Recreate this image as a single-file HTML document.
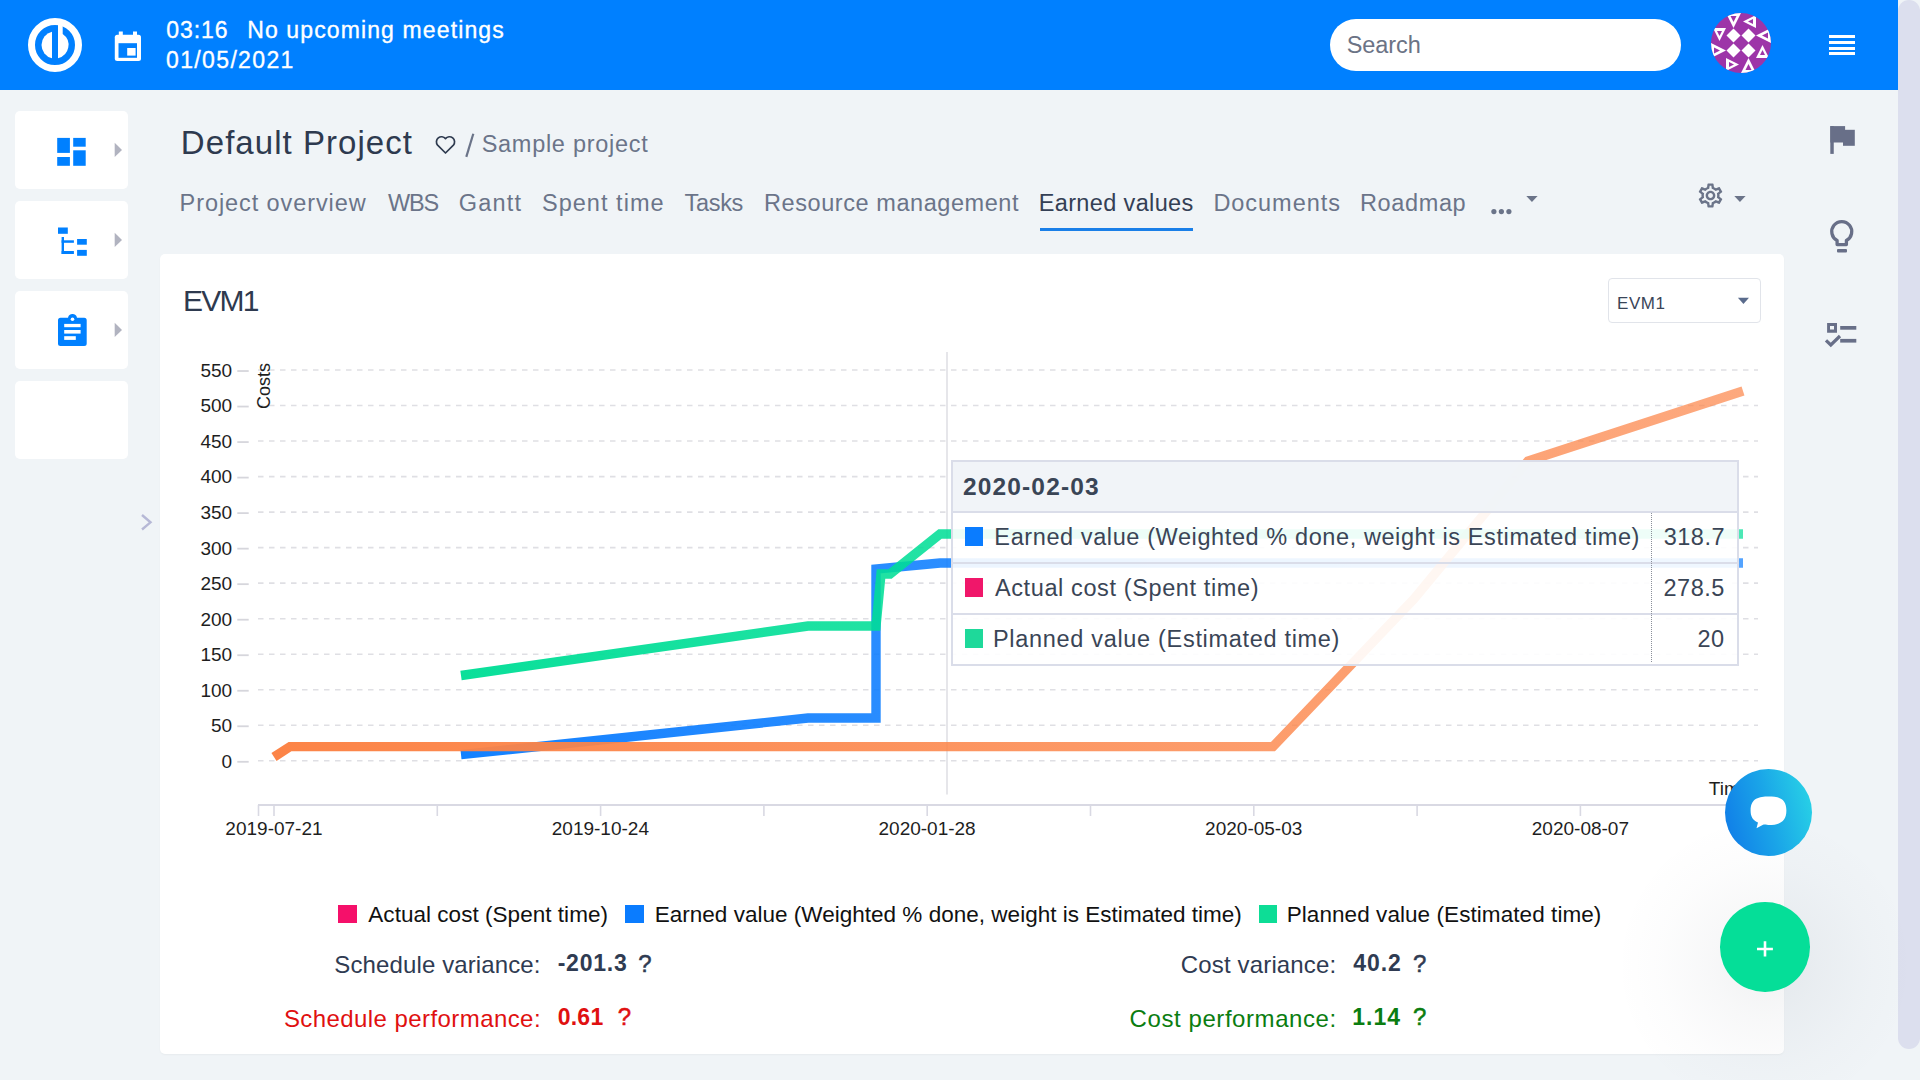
<!DOCTYPE html>
<html><head><meta charset="utf-8"><title>Earned values</title>
<style>
html,body{margin:0;padding:0;width:1920px;height:1080px;overflow:hidden;background:#f0f4f7;font-family:"Liberation Sans",sans-serif;}
.t{position:absolute;white-space:nowrap;line-height:1;}
.a{position:absolute;}
svg{position:absolute;overflow:visible;}
</style></head><body>
<div class="a" style="left:0;top:0;width:1898px;height:90px;background:#0080ff"></div>
<div class="a" style="left:1898px;top:0;width:22px;height:1080px;background:#f0f4f7"></div>
<div class="a" style="left:1898px;top:0;width:22px;height:1049px;background:#dcdfee;border-radius:11px"></div>
<svg style="left:0;top:0" width="200" height="90">
<circle cx="55" cy="45" r="23.5" fill="none" stroke="#fff" stroke-width="7"/>
<path d="M52 31.84 A13.5 13.5 0 0 0 52 58.16 Z" fill="#fff"/>
<path d="M58 25 L62.7 25 L62.7 33.9 A13.5 13.5 0 0 1 58 58.16 Z" fill="#fff"/>
<rect x="114.8" y="34.8" width="26.2" height="26.2" rx="2.5" fill="#fff"/>
<rect x="118.8" y="31.5" width="4" height="5" fill="#fff"/>
<rect x="133" y="31.5" width="4" height="5" fill="#fff"/>
<rect x="118.5" y="43.2" width="18.5" height="14.6" fill="#0080ff"/>
<rect x="127.2" y="48" width="8.4" height="7.6" fill="#fff"/>
</svg>
<div class="t" style="left:166.18px;top:19.03px;font-size:23px;letter-spacing:0.960px;color:#fff;-webkit-text-stroke:0.35px #fff">03:16</div>
<div class="t" style="left:247.16px;top:19.03px;font-size:23px;letter-spacing:1.124px;color:#fff;-webkit-text-stroke:0.35px #fff">No upcoming meetings</div>
<div class="t" style="left:166.08px;top:48.73px;font-size:23px;letter-spacing:1.349px;color:#fff;-webkit-text-stroke:0.35px #fff">01/05/2021</div>
<div class="a" style="left:1330px;top:19px;width:351px;height:52px;background:#fff;border-radius:26px"></div>
<div class="t" style="left:1346.64px;top:34.01px;font-size:23.5px;letter-spacing:-0.059px;color:#6b7385;">Search</div>
<svg style="left:1711px;top:13px" width="60" height="60" viewBox="0 0 60 60"><defs><clipPath id="av"><circle cx="30" cy="30" r="30"/></clipPath></defs><g clip-path="url(#av)"><rect width="60" height="60" fill="#9d35a8"/><path d="M22.5 15.5 L29.5 22.5 L22.5 29.5 L15.5 22.5Z" fill="#fff"/><path d="M37.5 15.5 L44.5 22.5 L37.5 29.5 L30.5 22.5Z" fill="#fff"/><path d="M22.5 30.5 L29.5 37.5 L22.5 44.5 L15.5 37.5Z" fill="#fff"/><path d="M37.5 30.5 L44.5 37.5 L37.5 44.5 L30.5 37.5Z" fill="#fff"/><g transform="rotate(0 30 30)"><path d="M15 0 H30 L22.5 15Z" fill="#fff"/><path d="M19.5 3 H25.5 L22.5 9Z" fill="#9d35a8"/><path d="M45 2 V15 L32 8.5Z" fill="#fff"/><path d="M42 6 V11 L37 8.5Z" fill="#9d35a8"/><path d="M45 0 H60 V15Z" fill="#fff"/></g><g transform="rotate(90 30 30)"><path d="M15 0 H30 L22.5 15Z" fill="#fff"/><path d="M19.5 3 H25.5 L22.5 9Z" fill="#9d35a8"/><path d="M45 2 V15 L32 8.5Z" fill="#fff"/><path d="M42 6 V11 L37 8.5Z" fill="#9d35a8"/><path d="M45 0 H60 V15Z" fill="#fff"/></g><g transform="rotate(180 30 30)"><path d="M15 0 H30 L22.5 15Z" fill="#fff"/><path d="M19.5 3 H25.5 L22.5 9Z" fill="#9d35a8"/><path d="M45 2 V15 L32 8.5Z" fill="#fff"/><path d="M42 6 V11 L37 8.5Z" fill="#9d35a8"/><path d="M45 0 H60 V15Z" fill="#fff"/></g><g transform="rotate(270 30 30)"><path d="M15 0 H30 L22.5 15Z" fill="#fff"/><path d="M19.5 3 H25.5 L22.5 9Z" fill="#9d35a8"/><path d="M45 2 V15 L32 8.5Z" fill="#fff"/><path d="M42 6 V11 L37 8.5Z" fill="#9d35a8"/><path d="M45 0 H60 V15Z" fill="#fff"/></g></g></svg>
<div class="a" style="left:1829px;top:35px;width:26px;height:3.2px;background:#fff"></div>
<div class="a" style="left:1829px;top:41px;width:26px;height:3.2px;background:#fff"></div>
<div class="a" style="left:1829px;top:46.6px;width:26px;height:3.2px;background:#fff"></div>
<div class="a" style="left:1829px;top:52.3px;width:26px;height:3.2px;background:#fff"></div>
<div class="a" style="left:15px;top:111px;width:113px;height:78px;background:#fff;border-radius:5px"></div>
<div class="a" style="left:15px;top:201px;width:113px;height:78px;background:#fff;border-radius:5px"></div>
<div class="a" style="left:15px;top:291px;width:113px;height:78px;background:#fff;border-radius:5px"></div>
<div class="a" style="left:15px;top:381px;width:113px;height:78px;background:#fff;border-radius:5px"></div>
<svg style="left:0;top:0" width="160" height="560">
<g fill="#0080ff">
<rect x="57.2" y="137.9" width="12.7" height="15"/>
<rect x="73.2" y="137.9" width="12.5" height="8.8"/>
<rect x="57.2" y="157" width="12.7" height="8.8"/>
<rect x="73.2" y="150.3" width="12.5" height="15.5"/>
<rect x="58" y="227.5" width="9.8" height="6.3"/>
<rect x="61.6" y="237" width="2.4" height="17"/>
<rect x="61.6" y="240.3" width="12.3" height="2.5"/>
<rect x="61.6" y="251" width="12.3" height="3"/>
<rect x="77.1" y="239" width="9.7" height="5.7"/>
<rect x="77.1" y="249.9" width="9.7" height="5.9"/>
<path d="M60.5 317.7 H68 A4.6 4.6 0 0 1 77 317.7 H84.2 A2.5 2.5 0 0 1 86.7 320.2 V343.5 A2.5 2.5 0 0 1 84.2 346 H60.5 A2.5 2.5 0 0 1 58 343.5 V320.2 A2.5 2.5 0 0 1 60.5 317.7Z"/>
</g>
<g fill="#fff">
<circle cx="72.5" cy="319.3" r="1.8"/>
<rect x="64.2" y="323.9" width="16.4" height="3.3"/>
<rect x="64.2" y="330" width="16.4" height="3.6"/>
<rect x="64.2" y="336.2" width="11.6" height="3.7"/>
</g>
<g fill="#b1b3c0">
<path d="M114.7 142.8 L122 150 L114.7 157Z"/>
<path d="M114.7 232.8 L122 240 L114.7 247Z"/>
<path d="M114.7 322.8 L122 330 L114.7 337Z"/>
</g>
<path d="M142 515 L150.5 522.3 L142 529.5" fill="none" stroke="#b6b8d6" stroke-width="2.4"/>
</svg>
<div class="t" style="left:180.86px;top:125.67px;font-size:33px;letter-spacing:1.049px;color:#2e3a4f;">Default Project</div>
<svg style="left:434px;top:133px" width="24" height="24" viewBox="0 0 24 24">
<path d="M11.5 20 L3.6 12.1 A4.6 4.6 0 0 1 11.5 5.6 A4.6 4.6 0 0 1 19.4 12.1 Z" fill="none" stroke="#2e3a4f" stroke-width="1.7" stroke-linejoin="round"/>
</svg>
<svg style="left:0;top:0" width="500" height="170"><path d="M473.3 133.8 L466.3 156.9" stroke="#6b7489" stroke-width="2.2"/></svg>
<div class="t" style="left:481.69px;top:132.86px;font-size:23.5px;letter-spacing:0.715px;color:#6b7489;">Sample project</div>
<div class="t" style="left:179.62px;top:191.81px;font-size:23.5px;letter-spacing:0.913px;color:#6b7489;">Project overview</div>
<div class="t" style="left:387.88px;top:191.81px;font-size:23.5px;letter-spacing:-1.144px;color:#6b7489;">WBS</div>
<div class="t" style="left:458.82px;top:191.81px;font-size:23.5px;letter-spacing:1.209px;color:#6b7489;">Gantt</div>
<div class="t" style="left:541.94px;top:191.81px;font-size:23.5px;letter-spacing:1.032px;color:#6b7489;">Spent time</div>
<div class="t" style="left:684.53px;top:191.81px;font-size:23.5px;letter-spacing:-0.312px;color:#6b7489;">Tasks</div>
<div class="t" style="left:764.02px;top:191.81px;font-size:23.5px;letter-spacing:0.568px;color:#6b7489;">Resource management</div>
<div class="t" style="left:1038.72px;top:191.81px;font-size:23.5px;letter-spacing:0.360px;color:#344055;">Earned values</div>
<div class="t" style="left:1213.42px;top:191.81px;font-size:23.5px;letter-spacing:0.962px;color:#6b7489;">Documents</div>
<div class="t" style="left:1360.02px;top:191.81px;font-size:23.5px;letter-spacing:0.625px;color:#6b7489;">Roadmap</div>
<div class="a" style="left:1040px;top:228px;width:153px;height:3px;background:#1a7fe8"></div>
<svg style="left:1480px;top:175px" width="300" height="50">
<g fill="#6b7489">
<circle cx="13.9" cy="36.6" r="2.6"/><circle cx="21.4" cy="36.6" r="2.6"/><circle cx="28.9" cy="36.6" r="2.6"/>
<path d="M46.3 21 L57.6 21 L51.95 26.9Z"/>
<path d="M254.3 21 L265.6 21 L259.95 26.9Z"/>
</g>
<g transform="translate(1698 183.1) scale(1.03)" fill="#6b7489">
</g>
</svg>
<svg style="left:1695.5px;top:181px" width="29" height="29" viewBox="0 0 24 24">
<path fill="#6b7489" d="M19.43 12.98c.04-.32.07-.64.07-.98 0-.34-.03-.66-.07-.98l2.11-1.65c.19-.15.24-.42.12-.64l-2-3.46c-.09-.16-.26-.25-.44-.25-.06 0-.12.01-.17.03l-2.49 1c-.52-.4-1.08-.73-1.690-.98l-.38-2.65C14.46 2.18 14.25 2 14 2h-4c-.25 0-.46.18-.49.42l-.38 2.65c-.61.25-1.17.59-1.69.98l-2.49-1c-.06-.02-.12-.03-.18-.03-.17 0-.34.09-.43.25l-2 3.46c-.13.22-.07.49.12.64l2.11 1.65c-.04.32-.07.65-.07.98 0 .33.03.66.07.98l-2.11 1.65c-.19.15-.24.42-.12.64l2 3.46c.09.16.26.25.44.25.06 0 .12-.01.17-.03l2.490-1c.52.4 1.08.73 1.69.98l.38 2.65c.03.24.24.42.49.42h4c.25 0 .46-.18.49-.42l.38-2.65c.61-.25 1.17-.59 1.69-.98l2.49 1c.06.02.12.03.18.03.17 0 .34-.09.43-.25l2-3.46c.12-.22.07-.49-.12-.64l-2.11-1.65zm-1.98-1.71c.04.31.05.52.05.73 0 .21-.02.43-.05.73l-.14 1.13.89.7 1.08.84-.7 1.21-1.27-.51-1.04-.42-.9.68c-.43.32-.84.56-1.25.73l-1.06.43-.16 1.13-.2 1.35h-1.4l-.19-1.35-.16-1.130-1.06-.43c-.43-.18-.83-.41-1.23-.71l-.91-.7-1.06.43-1.27.51-.7-1.21 1.08-.84.89-.7-.14-1.13c-.03-.31-.05-.54-.05-.74s.02-.43.05-.73l.14-1.13-.89-.7-1.08-.84.7-1.21 1.27.51 1.04.42.9-.68c.43-.32.84-.56 1.25-.73l1.06-.43.16-1.13.2-1.35h1.39l.19 1.35.16 1.13 1.06.43c.43.18.83.41 1.23.71l.91.7 1.06-.43 1.27-.51.7 1.21-1.07.85-.89.7.14 1.13zM12 8c-2.21 0-4 1.79-4 4s1.79 4 4 4 4-1.79 4-4-1.79-4-4-4zm0 6c-1.1 0-2-.9-2-2s.9-2 2-2 2 .9 2 2-.9 2-2 2z"/>
</svg>
<svg style="left:1800px;top:100px" width="98" height="270">
<g fill="#686f88">
<rect x="30.3" y="26.1" width="3.45" height="27.8"/>
<rect x="30.3" y="26.1" width="14.8" height="16.4"/>
<rect x="43" y="29.8" width="11.8" height="16"/>
</g>
<g fill="none" stroke="#686f88" stroke-width="3.3">
<path d="M37.1 144.6 V140.5 A10 10 0 1 1 46.4 140.5 V144.6 Z" stroke-linejoin="round"/>
</g>
<rect x="37" y="149.1" width="10" height="3.5" rx="1" fill="#686f88"/>
<g fill="#686f88">
<path d="M27.1 223.1 H37 V232.8 H27.1Z M30 226 V229.4 H34 V226Z" fill-rule="evenodd"/>
<rect x="40.2" y="226" width="16.1" height="3.7"/>
<rect x="40.2" y="238.9" width="16.1" height="3.7"/>
</g>
<path d="M26 240.3 L30.8 245 L40 236" fill="none" stroke="#686f88" stroke-width="3.2"/>
</svg>
<div class="a" style="left:160px;top:254px;width:1624px;height:800px;background:#fff;border-radius:5px;box-shadow:0 1px 2px rgba(0,0,0,0.04)"></div>
<div class="t" style="left:182.90px;top:286.36px;font-size:30px;letter-spacing:-1.717px;color:#2e3a4f;">EVM1</div>
<div class="a" style="left:1608px;top:278px;width:151px;height:43px;border:1px solid #e1e4ea;border-radius:4px;background:#fff"></div>
<div class="t" style="left:1617.04px;top:294.61px;font-size:17px;letter-spacing:0.562px;color:#3a4558;">EVM1</div>
<svg style="left:0;top:0" width="1800" height="320"><path d="M1737.9 297.8 H1749 L1743.45 304.1Z" fill="#5a6b8c"/></svg>
<svg style="left:0;top:0" width="1920" height="1080"><defs><linearGradient id="go" gradientUnits="userSpaceOnUse" x1="274" y1="0" x2="1743" y2="0"><stop offset="0" stop-color="#fc8447" stop-opacity="1"/><stop offset="1" stop-color="#fc8447" stop-opacity="0.7"/></linearGradient><linearGradient id="gb" gradientUnits="userSpaceOnUse" x1="274" y1="0" x2="1743" y2="0"><stop offset="0" stop-color="#0a7cff" stop-opacity="1"/><stop offset="1" stop-color="#0a7cff" stop-opacity="0.7"/></linearGradient><linearGradient id="gg" gradientUnits="userSpaceOnUse" x1="274" y1="0" x2="1743" y2="0"><stop offset="0" stop-color="#00de96" stop-opacity="1"/><stop offset="1" stop-color="#00de96" stop-opacity="0.7"/></linearGradient></defs><line x1="258" y1="760.80" x2="1758" y2="760.80" stroke="#dfdfe4" stroke-width="1.6" stroke-dasharray="5.5 5.5"/><line x1="237.3" y1="761.80" x2="248.7" y2="761.80" stroke="#d6d6dc" stroke-width="1.8"/><line x1="258" y1="725.27" x2="1758" y2="725.27" stroke="#dfdfe4" stroke-width="1.6" stroke-dasharray="5.5 5.5"/><line x1="237.3" y1="726.27" x2="248.7" y2="726.27" stroke="#d6d6dc" stroke-width="1.8"/><line x1="258" y1="689.75" x2="1758" y2="689.75" stroke="#dfdfe4" stroke-width="1.6" stroke-dasharray="5.5 5.5"/><line x1="237.3" y1="690.75" x2="248.7" y2="690.75" stroke="#d6d6dc" stroke-width="1.8"/><line x1="258" y1="654.22" x2="1758" y2="654.22" stroke="#dfdfe4" stroke-width="1.6" stroke-dasharray="5.5 5.5"/><line x1="237.3" y1="655.22" x2="248.7" y2="655.22" stroke="#d6d6dc" stroke-width="1.8"/><line x1="258" y1="618.70" x2="1758" y2="618.70" stroke="#dfdfe4" stroke-width="1.6" stroke-dasharray="5.5 5.5"/><line x1="237.3" y1="619.70" x2="248.7" y2="619.70" stroke="#d6d6dc" stroke-width="1.8"/><line x1="258" y1="583.17" x2="1758" y2="583.17" stroke="#dfdfe4" stroke-width="1.6" stroke-dasharray="5.5 5.5"/><line x1="237.3" y1="584.17" x2="248.7" y2="584.17" stroke="#d6d6dc" stroke-width="1.8"/><line x1="258" y1="547.65" x2="1758" y2="547.65" stroke="#dfdfe4" stroke-width="1.6" stroke-dasharray="5.5 5.5"/><line x1="237.3" y1="548.65" x2="248.7" y2="548.65" stroke="#d6d6dc" stroke-width="1.8"/><line x1="258" y1="512.12" x2="1758" y2="512.12" stroke="#dfdfe4" stroke-width="1.6" stroke-dasharray="5.5 5.5"/><line x1="237.3" y1="513.12" x2="248.7" y2="513.12" stroke="#d6d6dc" stroke-width="1.8"/><line x1="258" y1="476.60" x2="1758" y2="476.60" stroke="#dfdfe4" stroke-width="1.6" stroke-dasharray="5.5 5.5"/><line x1="237.3" y1="477.60" x2="248.7" y2="477.60" stroke="#d6d6dc" stroke-width="1.8"/><line x1="258" y1="441.07" x2="1758" y2="441.07" stroke="#dfdfe4" stroke-width="1.6" stroke-dasharray="5.5 5.5"/><line x1="237.3" y1="442.07" x2="248.7" y2="442.07" stroke="#d6d6dc" stroke-width="1.8"/><line x1="258" y1="405.55" x2="1758" y2="405.55" stroke="#dfdfe4" stroke-width="1.6" stroke-dasharray="5.5 5.5"/><line x1="237.3" y1="406.55" x2="248.7" y2="406.55" stroke="#d6d6dc" stroke-width="1.8"/><line x1="258" y1="370.02" x2="1758" y2="370.02" stroke="#dfdfe4" stroke-width="1.6" stroke-dasharray="5.5 5.5"/><line x1="237.3" y1="371.02" x2="248.7" y2="371.02" stroke="#d6d6dc" stroke-width="1.8"/><line x1="947" y1="352" x2="947" y2="794.5" stroke="#e6e6ea" stroke-width="2"/><line x1="258" y1="805" x2="1758" y2="805" stroke="#d9d9e3" stroke-width="2"/><line x1="258.50" y1="805" x2="258.50" y2="816" stroke="#d9d9e3" stroke-width="1.6"/><line x1="274.00" y1="805" x2="274.00" y2="816" stroke="#d9d9e3" stroke-width="1.6"/><line x1="437.30" y1="805" x2="437.30" y2="816" stroke="#d9d9e3" stroke-width="1.6"/><line x1="600.60" y1="805" x2="600.60" y2="816" stroke="#d9d9e3" stroke-width="1.6"/><line x1="763.90" y1="805" x2="763.90" y2="816" stroke="#d9d9e3" stroke-width="1.6"/><line x1="927.20" y1="805" x2="927.20" y2="816" stroke="#d9d9e3" stroke-width="1.6"/><line x1="1090.50" y1="805" x2="1090.50" y2="816" stroke="#d9d9e3" stroke-width="1.6"/><line x1="1253.80" y1="805" x2="1253.80" y2="816" stroke="#d9d9e3" stroke-width="1.6"/><line x1="1417.10" y1="805" x2="1417.10" y2="816" stroke="#d9d9e3" stroke-width="1.6"/><line x1="1580.40" y1="805" x2="1580.40" y2="816" stroke="#d9d9e3" stroke-width="1.6"/><line x1="1743.70" y1="805" x2="1743.70" y2="816" stroke="#d9d9e3" stroke-width="1.6"/><g fill="none" stroke-width="9.4" stroke-linejoin="miter"><polyline stroke="url(#gb)" points="461,754.7 808,718 876,718 876,569 940,563 1743,563"/><polyline stroke="url(#go)" points="274,757 290,746.6 1273,746.6 1414,599 1528,461 1743,391"/><polyline stroke="url(#gg)" points="461,675.5 808,626 876,626 881,574 890,574 940,534 1743,534"/></g></svg>
<div class="t" style="left:221.52px;top:751.67px;font-size:19px;letter-spacing:0.000px;color:#1e1e1e;">0</div>
<div class="t" style="left:210.98px;top:716.14px;font-size:19px;letter-spacing:0.000px;color:#1e1e1e;">50</div>
<div class="t" style="left:200.43px;top:680.62px;font-size:19px;letter-spacing:0.000px;color:#1e1e1e;">100</div>
<div class="t" style="left:200.43px;top:645.09px;font-size:19px;letter-spacing:0.000px;color:#1e1e1e;">150</div>
<div class="t" style="left:200.43px;top:609.57px;font-size:19px;letter-spacing:0.000px;color:#1e1e1e;">200</div>
<div class="t" style="left:200.43px;top:574.04px;font-size:19px;letter-spacing:0.000px;color:#1e1e1e;">250</div>
<div class="t" style="left:200.43px;top:538.52px;font-size:19px;letter-spacing:0.000px;color:#1e1e1e;">300</div>
<div class="t" style="left:200.43px;top:502.99px;font-size:19px;letter-spacing:0.000px;color:#1e1e1e;">350</div>
<div class="t" style="left:200.43px;top:467.47px;font-size:19px;letter-spacing:0.000px;color:#1e1e1e;">400</div>
<div class="t" style="left:200.43px;top:431.94px;font-size:19px;letter-spacing:0.000px;color:#1e1e1e;">450</div>
<div class="t" style="left:200.43px;top:396.42px;font-size:19px;letter-spacing:0.000px;color:#1e1e1e;">500</div>
<div class="t" style="left:200.43px;top:360.89px;font-size:19px;letter-spacing:0.000px;color:#1e1e1e;">550</div>
<div class="t" style="left:264px;top:386px;font-size:18px;color:#1e1e1e;transform:translate(-50%,-50%) rotate(-90deg);transform-origin:center">Costs</div>
<div class="t" style="left:225.36px;top:818.72px;font-size:19px;letter-spacing:0.000px;color:#1e1e1e;">2019-07-21</div>
<div class="t" style="left:551.77px;top:818.72px;font-size:19px;letter-spacing:0.000px;color:#1e1e1e;">2019-10-24</div>
<div class="t" style="left:878.51px;top:818.72px;font-size:19px;letter-spacing:0.000px;color:#1e1e1e;">2020-01-28</div>
<div class="t" style="left:1205.11px;top:818.72px;font-size:19px;letter-spacing:0.000px;color:#1e1e1e;">2020-05-03</div>
<div class="t" style="left:1531.81px;top:818.72px;font-size:19px;letter-spacing:0.000px;color:#1e1e1e;">2020-08-07</div>
<div class="t" style="left:1708.82px;top:779.32px;font-size:19px;letter-spacing:0.000px;color:#1e1e1e;">Time</div>
<div class="a" style="left:951px;top:460px;width:784px;height:202px;border:2px solid #dadde9;background:rgba(255,255,255,0.91)"></div>
<div class="a" style="left:953px;top:462px;width:784px;height:49px;background:rgba(240,243,247,0.9)"></div>
<div class="a" style="left:953px;top:511px;width:784px;height:2px;background:#dadde9"></div>
<div class="a" style="left:953px;top:562px;width:784px;height:2px;background:#dadde9"></div>
<div class="a" style="left:953px;top:613px;width:784px;height:2px;background:#dadde9"></div>
<div class="a" style="left:1651px;top:513px;width:0;height:149px;border-left:1px dotted #8a8f9a"></div>
<div class="t" style="left:962.89px;top:475.06px;font-size:24.5px;letter-spacing:1.161px;color:#3a4556;font-weight:700;">2020-02-03</div>
<div class="a" style="left:965px;top:527px;width:18px;height:18.5px;background:#0a7cff"></div>
<div class="t" style="left:994.37px;top:525.51px;font-size:23.5px;letter-spacing:0.598px;color:#3a4556;">Earned value (Weighted % done, weight is Estimated time)</div>
<div class="t" style="left:1663.76px;top:525.51px;font-size:23.5px;letter-spacing:0.491px;color:#3a4556;">318.7</div>
<div class="a" style="left:965px;top:578px;width:18px;height:18.5px;background:#f0176a"></div>
<div class="t" style="left:994.90px;top:576.51px;font-size:23.5px;letter-spacing:0.616px;color:#3a4556;">Actual cost (Spent time)</div>
<div class="t" style="left:1663.53px;top:576.51px;font-size:23.5px;letter-spacing:0.491px;color:#3a4556;">278.5</div>
<div class="a" style="left:965px;top:629px;width:18px;height:18.5px;background:#1ed99a"></div>
<div class="t" style="left:993.02px;top:627.51px;font-size:23.5px;letter-spacing:0.685px;color:#3a4556;">Planned value (Estimated time)</div>
<div class="t" style="left:1697.62px;top:627.51px;font-size:23.5px;letter-spacing:0.413px;color:#3a4556;">20</div>
<div class="a" style="left:338.3px;top:905px;width:18.5px;height:18px;background:#f5106a"></div>
<div class="t" style="left:368.30px;top:903.65px;font-size:22.5px;letter-spacing:0.036px;color:#111;">Actual cost (Spent time)</div>
<div class="a" style="left:625.2px;top:905px;width:18.5px;height:18px;background:#0a7cff"></div>
<div class="t" style="left:654.70px;top:903.65px;font-size:22.5px;letter-spacing:0.019px;color:#111;">Earned value (Weighted % done, weight is Estimated time)</div>
<div class="a" style="left:1258.5px;top:905px;width:18.5px;height:18px;background:#0ddd96"></div>
<div class="t" style="left:1286.70px;top:903.65px;font-size:22.5px;letter-spacing:0.069px;color:#111;">Planned value (Estimated time)</div>
<div class="t" style="left:334.32px;top:953.38px;font-size:24px;letter-spacing:0.119px;color:#2f3b52;">Schedule variance:</div>
<div class="t" style="left:557.68px;top:952.23px;font-size:23px;letter-spacing:0.784px;color:#2f3b52;font-weight:700;">-201.3</div>
<div class="t" style="left:638.24px;top:951.68px;font-size:24px;letter-spacing:0.000px;color:#2f3b52;-webkit-text-stroke:0.5px #2f3b52">?</div>
<div class="t" style="left:283.92px;top:1006.78px;font-size:24px;letter-spacing:0.425px;color:#e01010;">Schedule performance:</div>
<div class="t" style="left:557.68px;top:1005.63px;font-size:23px;letter-spacing:0.253px;color:#e01010;font-weight:700;">0.61</div>
<div class="t" style="left:617.84px;top:1005.18px;font-size:24px;letter-spacing:0.000px;color:#e01010;-webkit-text-stroke:0.5px #e01010">?</div>
<div class="t" style="left:1180.80px;top:953.38px;font-size:24px;letter-spacing:0.154px;color:#2f3b52;">Cost variance:</div>
<div class="t" style="left:1353.25px;top:952.23px;font-size:23px;letter-spacing:0.910px;color:#2f3b52;font-weight:700;">40.2</div>
<div class="t" style="left:1413.04px;top:951.68px;font-size:24px;letter-spacing:0.000px;color:#2f3b52;-webkit-text-stroke:0.5px #2f3b52">?</div>
<div class="t" style="left:1129.60px;top:1006.78px;font-size:24px;letter-spacing:0.573px;color:#0b7d10;">Cost performance:</div>
<div class="t" style="left:1352.22px;top:1005.63px;font-size:23px;letter-spacing:1.053px;color:#0b7d10;font-weight:700;">1.14</div>
<div class="t" style="left:1413.04px;top:1005.18px;font-size:24px;letter-spacing:0.000px;color:#0b7d10;-webkit-text-stroke:0.5px #0b7d10">?</div>
<div class="a" style="left:1615px;top:815px;width:300px;height:300px;border-radius:50%;background:radial-gradient(circle closest-side, rgba(40,50,70,0.065) 0%, rgba(40,50,70,0.035) 35%, rgba(40,50,70,0.012) 70%, rgba(40,50,70,0) 100%)"></div>
<div class="a" style="left:1720.2px;top:902.1px;width:89.5px;height:89.5px;border-radius:50%;background:#05de98"></div>
<svg style="left:1740px;top:921.5px" width="50" height="50"><path d="M17 27 H32.9 M25 19.3 V34.6" stroke="#fff" stroke-width="2.6"/></svg>
<div class="a" style="left:1724.9px;top:769px;width:87.4px;height:87.4px;border-radius:50%;background:linear-gradient(75deg,#0f78e8 0%,#1aa5e8 50%,#2ad8e6 100%)"></div>
<svg style="left:1740px;top:780px" width="60" height="60"><path d="M28.5 16.5 C37.5 16.5 46.4 17.5 46.4 30.5 C46.4 43 37.5 45 28.5 45 C26 45 24.5 44.8 23.5 44.6 L16.5 48.2 L18 42.5 C12 40 10.6 35.5 10.6 30.5 C10.6 18 19.5 16.5 28.5 16.5Z" fill="#fff"/></svg>
</body></html>
